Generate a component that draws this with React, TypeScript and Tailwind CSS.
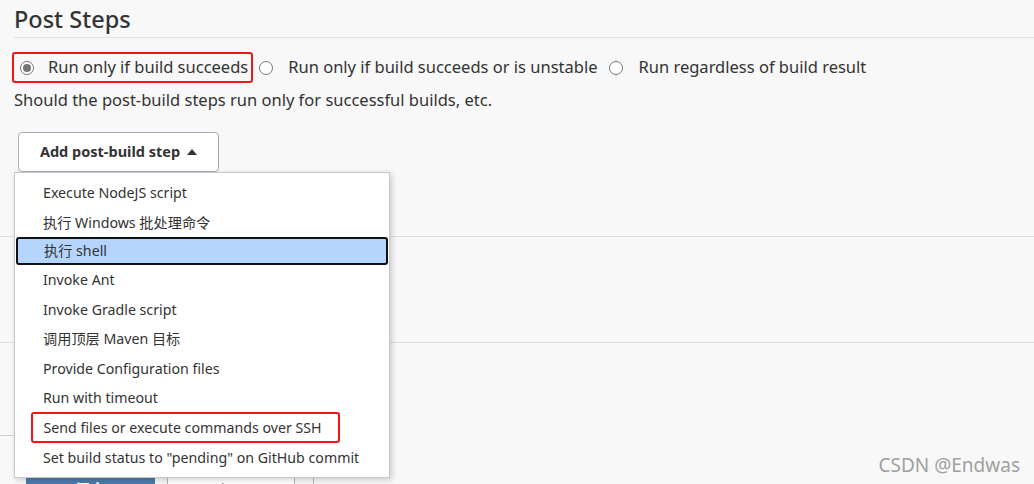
import React from 'react';

const font = { fontFamily: '"Noto Sans", "Noto Sans CJK SC", sans-serif' };

const menuItems = [
  'Execute NodeJS script',
  '执行 Windows 批处理命令',
  '执行 shell',
  'Invoke Ant',
  'Invoke Gradle script',
  '调用顶层 Maven 目标',
  'Provide Configuration files',
  'Run with timeout',
  'Send files or execute commands over SSH',
  'Set build status to "pending" on GitHub commit',
];

function Radio({ checked }: { checked?: boolean }) {
  return (
    <span className="inline-flex h-[14px] w-[14px] shrink-0 items-center justify-center rounded-full border border-[#767676] bg-white">
      {checked && <span className="h-[8px] w-[8px] rounded-full bg-[#757575]" />}
    </span>
  );
}

export default function App() {
  return (
    <div className="relative h-[484px] w-[1034px] overflow-hidden bg-[#f8f8f8] text-[#333]" style={font}>
      <div className="pl-[14px]">
        <h2 className="pt-[3px] text-[23.5px] font-medium leading-[32px] text-[#333]">Post Steps</h2>
        <div className="mt-[2px] h-px bg-[#e3e3e3]" />

        <div className="mt-[14px] flex h-[31px] items-center text-[16.5px] text-[#333]">
          <div className="-ml-[2px] flex h-[31px] items-center rounded-[3px] border-[2px] border-[#f21616] pl-[6px] pr-[3px]">
            <Radio checked />
            <span className="ml-[14px]">Run only if build succeeds</span>
          </div>
          <div className="ml-[6px] flex items-center">
            <Radio />
            <span className="ml-[15px]">Run only if build succeeds or is unstable</span>
          </div>
          <div className="ml-[12px] flex items-center">
            <Radio />
            <span className="ml-[15px]">Run regardless of build result</span>
          </div>
        </div>

        <p className="mt-[5px] text-[16.5px] leading-[24px]">Should the post-build steps run only for successful builds, etc.</p>

        <button className="ml-[4px] mt-[20px] flex h-[40px] w-[201px] items-center justify-center gap-[7px] rounded-[4px] border border-[#a3aeb8] bg-white text-[14.5px] font-bold text-[#333]">
          Add post-build step
          <svg width="10" height="6" viewBox="0 0 10 6">
            <path d="M0 6 L5 0 L10 6 Z" fill="#333" />
          </svg>
        </button>
      </div>

      <div className="mt-[64px] h-px bg-[#dcdcdc]" />
      <div className="mt-[105px] h-px bg-[#dcdcdc]" />

      <div className="mt-[92px] h-px w-[14px] bg-[#c9d6d0]" />
      <div className="mt-[39px] flex gap-[12px] pl-[26px]">
        <div className="flex h-[30px] w-[129px] items-start justify-center bg-[#4b7bab] pt-[3px] text-[17px] font-semibold text-white">保存</div>
        <div className="flex h-[30px] w-[128px] items-start justify-center border border-[#b8b8b8] bg-white pt-[3px] text-[17px] text-[#333]">应用</div>
        <div className="ml-[6px] h-[30px] w-px bg-[#b8b8b8]" />
      </div>

      <div className="absolute left-[14px] top-[172px] w-[376px] border border-[#c8c8c8] bg-white py-[5px] shadow-[2px_2px_6px_rgba(0,0,0,0.18)]">
        {menuItems.map((item, i) => {
          if (i === 2) {
            return (
              <div key={item} className="mx-[1px] flex h-[28px] items-center rounded-[3px] border-[2px] border-[#111] bg-[#b5d5fd] pl-[26px] text-[14.2px] text-[#333]">
                {item}
              </div>
            );
          }
          if (i === 8) {
            return (
              <div key={item} className="flex h-[30px] items-center">
                <div className="ml-[16px] flex h-[31px] w-[309px] items-center rounded-[3px] border-[2.5px] border-[#f21616] pl-[10.5px] text-[14.2px] text-[#333]">
                  {item}
                </div>
              </div>
            );
          }
          return (
            <div key={item} className="flex h-[29.5px] items-center pl-[28px] text-[14.2px] text-[#333]">
              {item}
            </div>
          );
        })}
      </div>

      <div className="absolute bottom-[5px] right-[14px] text-[19px] text-[#a0a0a0]">CSDN @Endwas</div>
    </div>
  );
}
